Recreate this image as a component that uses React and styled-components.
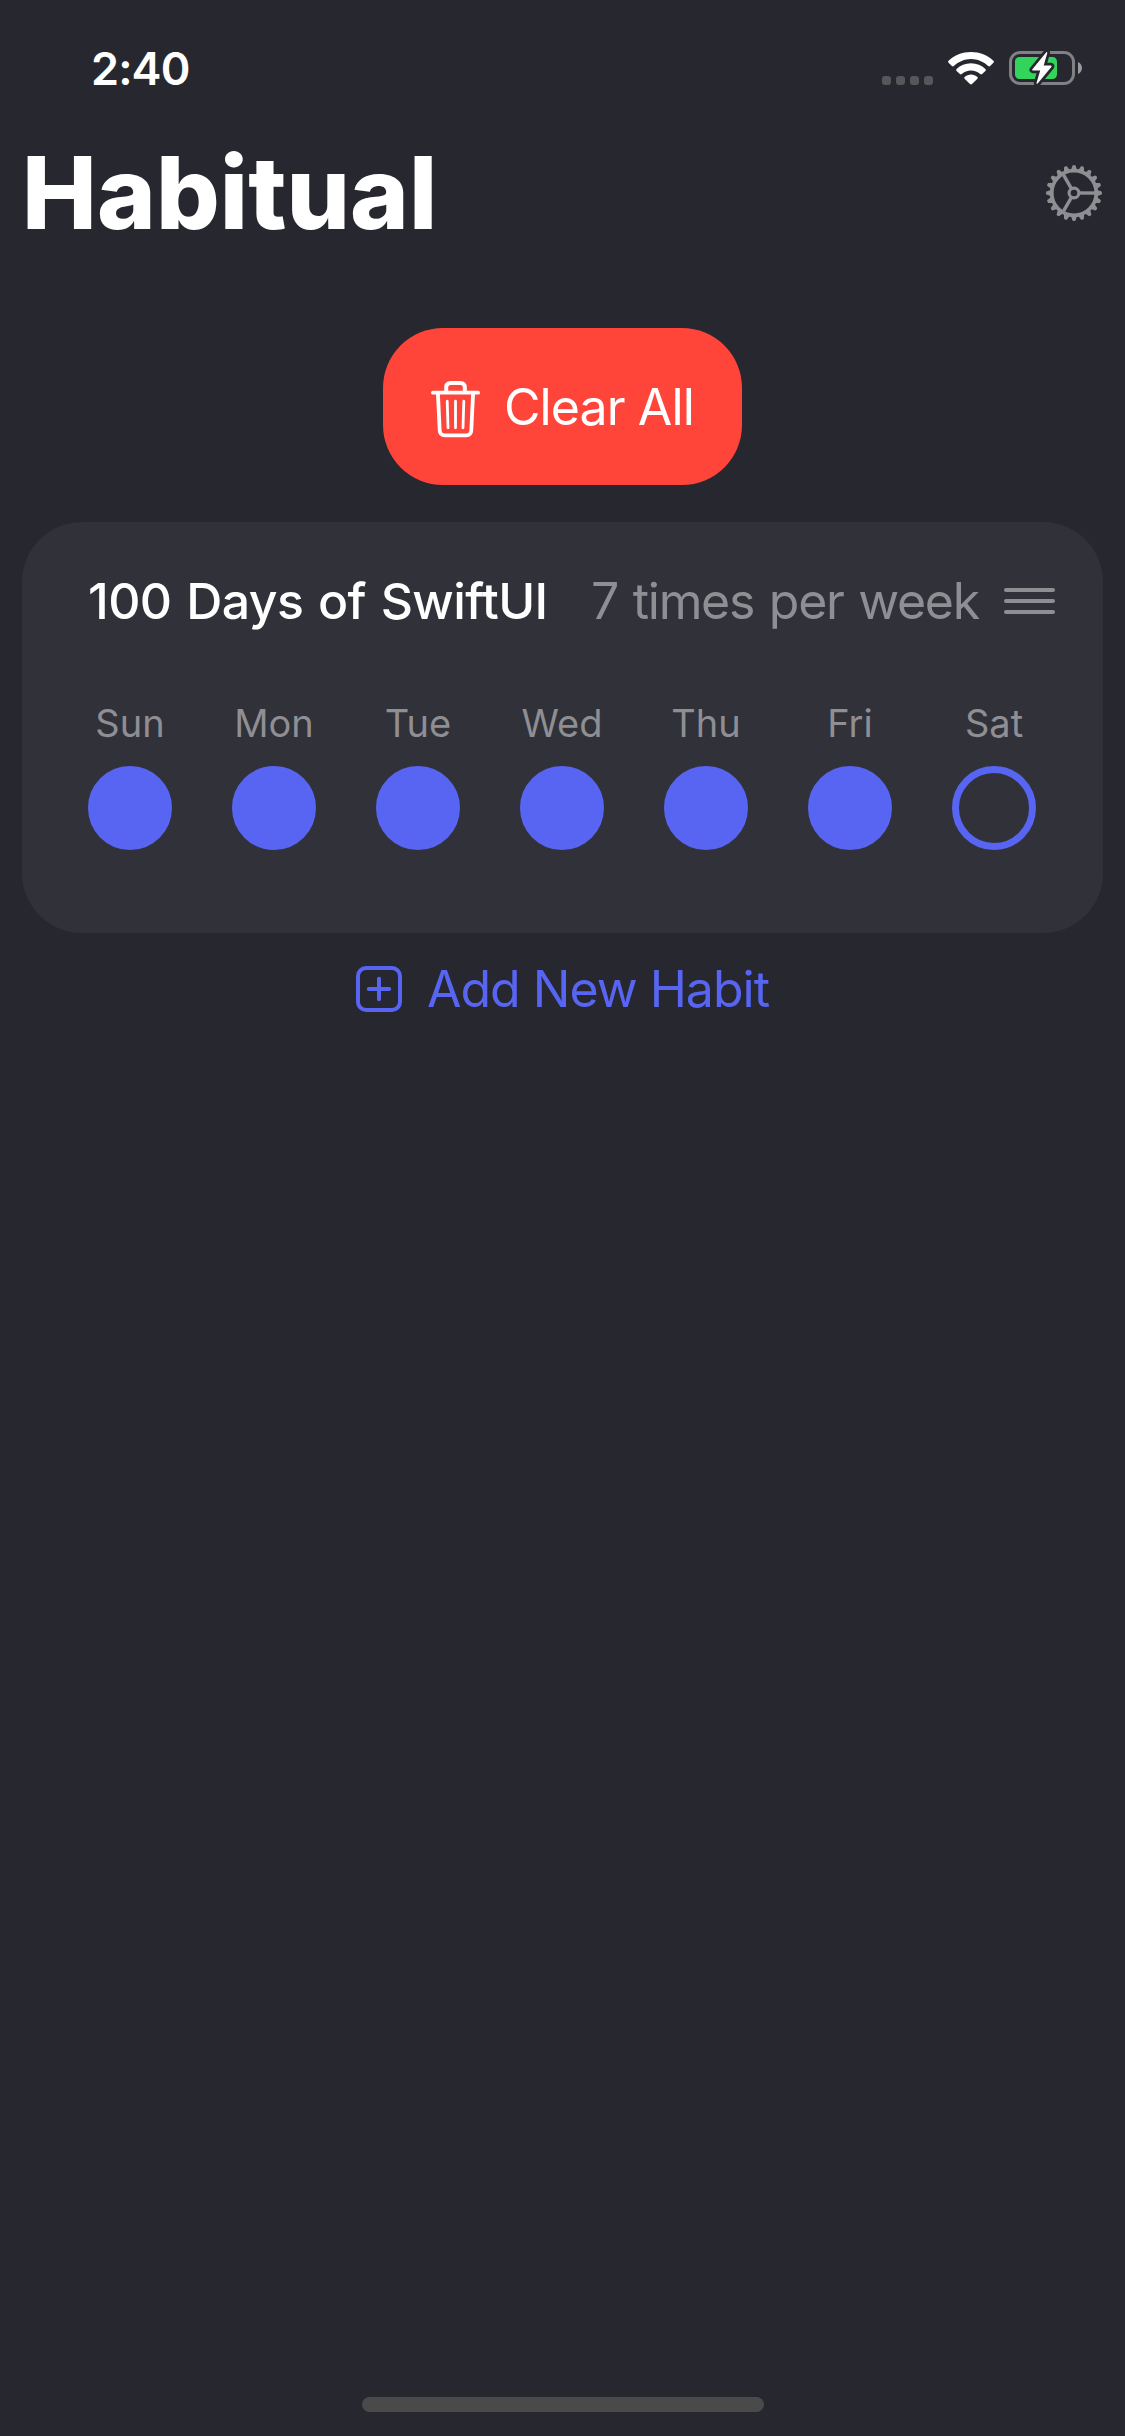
import React from "react";
import styled, { createGlobalStyle } from "styled-components";

const color = {
  background: "#27272f",
  card: "#31313a",
  accent: "#5765f2",
  danger: "#ff453a",
  muted: "#8e8e93",
  text: "#ffffff",
};

const GlobalStyle = createGlobalStyle`
  *, *::before, *::after { box-sizing: border-box; }
  body {
    margin: 0;
    background: ${color.background};
    color: ${color.text};
    font-family: Inter, "Liberation Sans", sans-serif;
  }
  button { border: 0; padding: 0; margin: 0; background: none; font: inherit; color: inherit; }
  svg { display: block; flex: none; }
`;

const Screen = styled.div`
  width: 1125px;
  height: 2436px;
  display: flex;
  flex-direction: column;
  overflow: hidden;
`;

const StatusBar = styled.header`
  height: 132px;
  padding: 4px 43px 0 91px;
  display: flex;
  align-items: center;
  justify-content: space-between;
`;

const Clock = styled.time`
  font-size: 45px;
  line-height: 60px;
  font-weight: 600;
  letter-spacing: ${(p) => p.$tracking};
  margin-top: 2px;
`;

const StatusIcons = styled.div`
  height: 34px;
  display: flex;
  align-items: flex-end;
`;

const Signal = styled.div`
  display: flex;
  gap: 5px;
  margin-right: 15px;
`;

const SignalDot = styled.span`
  width: 9px;
  height: 9px;
  border-radius: 3px;
  background: #56565b;
`;

const WifiSlot = styled.div`
  margin-right: 15px;
`;

const TitleBar = styled.div`
  height: 196px;
  padding: 0 22px 0 22px;
  display: flex;
  justify-content: space-between;
`;

const Title = styled.h1`
  margin: 1px 0 0;
  font-size: 100px;
  line-height: 120px;
  font-weight: 800;
  letter-spacing: ${(p) => p.$tracking};
`;

const SettingsButton = styled.button`
  height: 58px;
  margin-top: 32px;
`;

const ClearButton = styled.button`
  align-self: center;
  width: 359px;
  height: 157px;
  border-radius: 60px;
  background: ${color.danger};
  display: flex;
  align-items: center;
  padding-left: 48px;
  gap: 24px;

  svg { margin-top: 5px; }
`;

const ButtonLabel = styled.span`
  font-size: 50px;
  line-height: 60px;
  font-weight: 400;
  white-space: nowrap;
  letter-spacing: ${(p) => p.$tracking};
`;

const Card = styled.section`
  margin: 37px 22px 0;
  height: 411px;
  border-radius: 60px;
  background: ${color.card};
  padding: 49px 48px 0 66px;
`;

const CardHeader = styled.div`
  height: 60px;
  display: flex;
  align-items: center;
  word-spacing: 2px;
`;

const HabitName = styled.h2`
  margin: 0;
  width: 503px;
  font-size: 50px;
  line-height: 60px;
  font-weight: 500;
  white-space: nowrap;
  letter-spacing: ${(p) => p.$tracking};
`;

const Frequency = styled.span`
  flex: 1;
  font-size: 50px;
  line-height: 60px;
  color: ${color.muted};
  white-space: nowrap;
  letter-spacing: ${(p) => p.$tracking};
`;

const Handle = styled.div`
  width: 51px;
  display: flex;
  flex-direction: column;
  gap: 7px;
`;

const HandleLine = styled.span`
  height: 4px;
  border-radius: 2px;
  background: ${color.muted};
`;

const Week = styled.div`
  margin-top: 68px;
  display: flex;
  gap: 60px;
`;

const Day = styled.div`
  width: 84px;
  display: flex;
  flex-direction: column;
  align-items: center;
  gap: 19px;
`;

const DayName = styled.span`
  font-size: 38px;
  line-height: 48px;
  color: ${color.muted};
`;

const DayMark = styled.button`
  width: 84px;
  height: 84px;
  border-radius: 50%;
  border: 7px solid ${color.accent};
  background: ${(p) => (p.$done ? color.accent : "transparent")};
`;

const AddButton = styled.button`
  align-self: center;
  margin-top: 26px;
  height: 60px;
  width: 413px;
  display: flex;
  align-items: center;
  gap: 25px;
  color: ${color.accent};
`;

const HomeIndicator = styled.div`
  align-self: center;
  margin: auto 0 24px 1px;
  width: 402px;
  height: 15px;
  border-radius: 8px;
  background: #4a4a4a;
`;

const WifiIcon = () => (
  <svg width="46" height="33" viewBox="0 0 46 33" fill="#fff">
    <path d="M23 0C31.7 0 39.6 3.3 45.4 8.8Q46.4 9.8 45.4 10.8L42.1 14Q41.2 14.9 40.2 14C35.600 9.900 29.500 7.100 23 7.100S10.400 9.900 5.800 14Q4.800 14.900 3.900 14L.6 10.800Q-.4 9.800.6 8.800C6.400 3.300 14.300 0 23 0Z" />
    <path d="M23 11.200C28.600 11.200 33.700 13.300 37.400 16.900Q38.400 17.900 37.400 18.900L34.100 22.100Q33.200 23 32.200 22.100C29.700 19.900 26.500 18.500 23 18.500S16.300 19.900 13.800 22.100Q12.800 23 11.900 22.100L8.600 18.900Q7.600 17.900 8.600 16.900C12.300 13.300 17.400 11.200 23 11.200Z" />
    <path d="M23 22.500C25.500 22.500 27.700 23.400 29.400 24.900Q30.300 25.800 29.400 26.700L24 32.100Q23 33 22 32.100L16.600 26.700Q15.700 25.800 16.600 24.900C18.300 23.400 20.500 22.500 23 22.500Z" />
  </svg>
);

const BatteryIcon = () => (
  <svg width="73" height="34" viewBox="0 0 73 34">
    <rect x="1.500" y="1.500" width="63" height="31" rx="9.500" fill="none" stroke="#808085" strokeWidth="3" />
    <rect x="6" y="6" width="42" height="22" rx="4.500" fill="#32d45b" />
    <path d="M69 11C71.500 12 73 14.500 73 17S71.500 22 69 23Z" fill="#9b9b9f" />
    <path
      d="M37.300 1.300L23.200 18.500Q22.900 19.400 23.800 19.500H31.200L27.500 31.900Q27.700 33.300 28.700 32.500L42.500 15.800Q43 14.600 41.900 14.400H34.700L38.300 2Q38.200.7 37.300 1.300Z"
      fill="#fff" stroke={color.background} strokeWidth="5.500" paintOrder="stroke"
    />
  </svg>
);

const teeth = Array.from({ length: 20 }, (_, i) => i * 18);

const GearIcon = () => (
  <svg width="58" height="58" viewBox="-29 -29 58 58" fill="none" stroke={color.muted}>
    <circle r="22.300" strokeWidth="3.800" />
    <circle r="4.900" strokeWidth="3.200" />
    {[0, 120, 240].map((a) => (
      <path key={a} d="M6 0H21" strokeWidth="3.400" transform={`rotate(${a})`} />
    ))}
    {teeth.map((a) => (
      <path key={a} d="M23.300 -3L27.600 -1.500Q28.600 0 27.600 1.500L23.300 3Z" fill={color.muted} stroke="none" transform={`rotate(${a})`} />
    ))}
  </svg>
);

const TrashIcon = () => (
  <svg width="49" height="57" viewBox="0 0 49 57" fill="none" stroke="#fff" strokeLinecap="round" strokeLinejoin="round">
    <path d="M1.900 11.700H47.100" strokeWidth="3.800" />
    <path d="M15.200 11V6.500Q15.200 2 19.700 2H29.300Q33.800 2 33.800 6.500V11" strokeWidth="4" />
    <path d="M6.900 12L8.700 49.500Q9 54.300 13.800 54.300H35.200Q40 54.300 40.300 49.500L42.100 12" strokeWidth="3.800" />
    <path d="M16.200 20.200L17 46.800M24.500 20.200V46.800M32.800 20.200L32 46.800" strokeWidth="2.800" />
  </svg>
);

const PlusSquareIcon = () => (
  <svg width="46" height="46" viewBox="0 0 46 46" fill="none" stroke={color.accent} strokeWidth="4" strokeLinecap="round">
    <rect x="2" y="2" width="42" height="42" rx="8" />
    <path d="M23 12.800V33.200M12.800 23H33.200" />
  </svg>
);

const days = [
  { name: "Sun", done: true },
  { name: "Mon", done: true },
  { name: "Tue", done: true },
  { name: "Wed", done: true },
  { name: "Thu", done: true },
  { name: "Fri", done: true },
  { name: "Sat", done: false },
];

export default function App() {
  return (
    <Screen>
      <GlobalStyle />
      <StatusBar>
        <Clock $tracking="-0.9px">2:40</Clock>
        <StatusIcons>
          <Signal>
            {[0, 1, 2, 3].map((n) => <SignalDot key={n} />)}
          </Signal>
          <WifiSlot><WifiIcon /></WifiSlot>
          <BatteryIcon />
        </StatusIcons>
      </StatusBar>

      <TitleBar>
        <Title $tracking="0.1px">Habitual</Title>
        <SettingsButton aria-label="Settings"><GearIcon /></SettingsButton>
      </TitleBar>

      <ClearButton>
        <TrashIcon />
        <ButtonLabel $tracking="-0.9px">Clear All</ButtonLabel>
      </ClearButton>

      <Card>
        <CardHeader>
          <HabitName $tracking="-0.6px">100 Days of SwiftUI</HabitName>
          <Frequency $tracking="-1.3px">7 times per week</Frequency>
          <Handle>
            <HandleLine />
            <HandleLine />
            <HandleLine />
          </Handle>
        </CardHeader>
        <Week>
          {days.map((day) => (
            <Day key={day.name}>
              <DayName>{day.name}</DayName>
              <DayMark $done={day.done} aria-label={day.name} />
            </Day>
          ))}
        </Week>
      </Card>

      <AddButton>
        <PlusSquareIcon />
        <ButtonLabel $tracking="-1px">Add New Habit</ButtonLabel>
      </AddButton>

      <HomeIndicator />
    </Screen>
  );
}
